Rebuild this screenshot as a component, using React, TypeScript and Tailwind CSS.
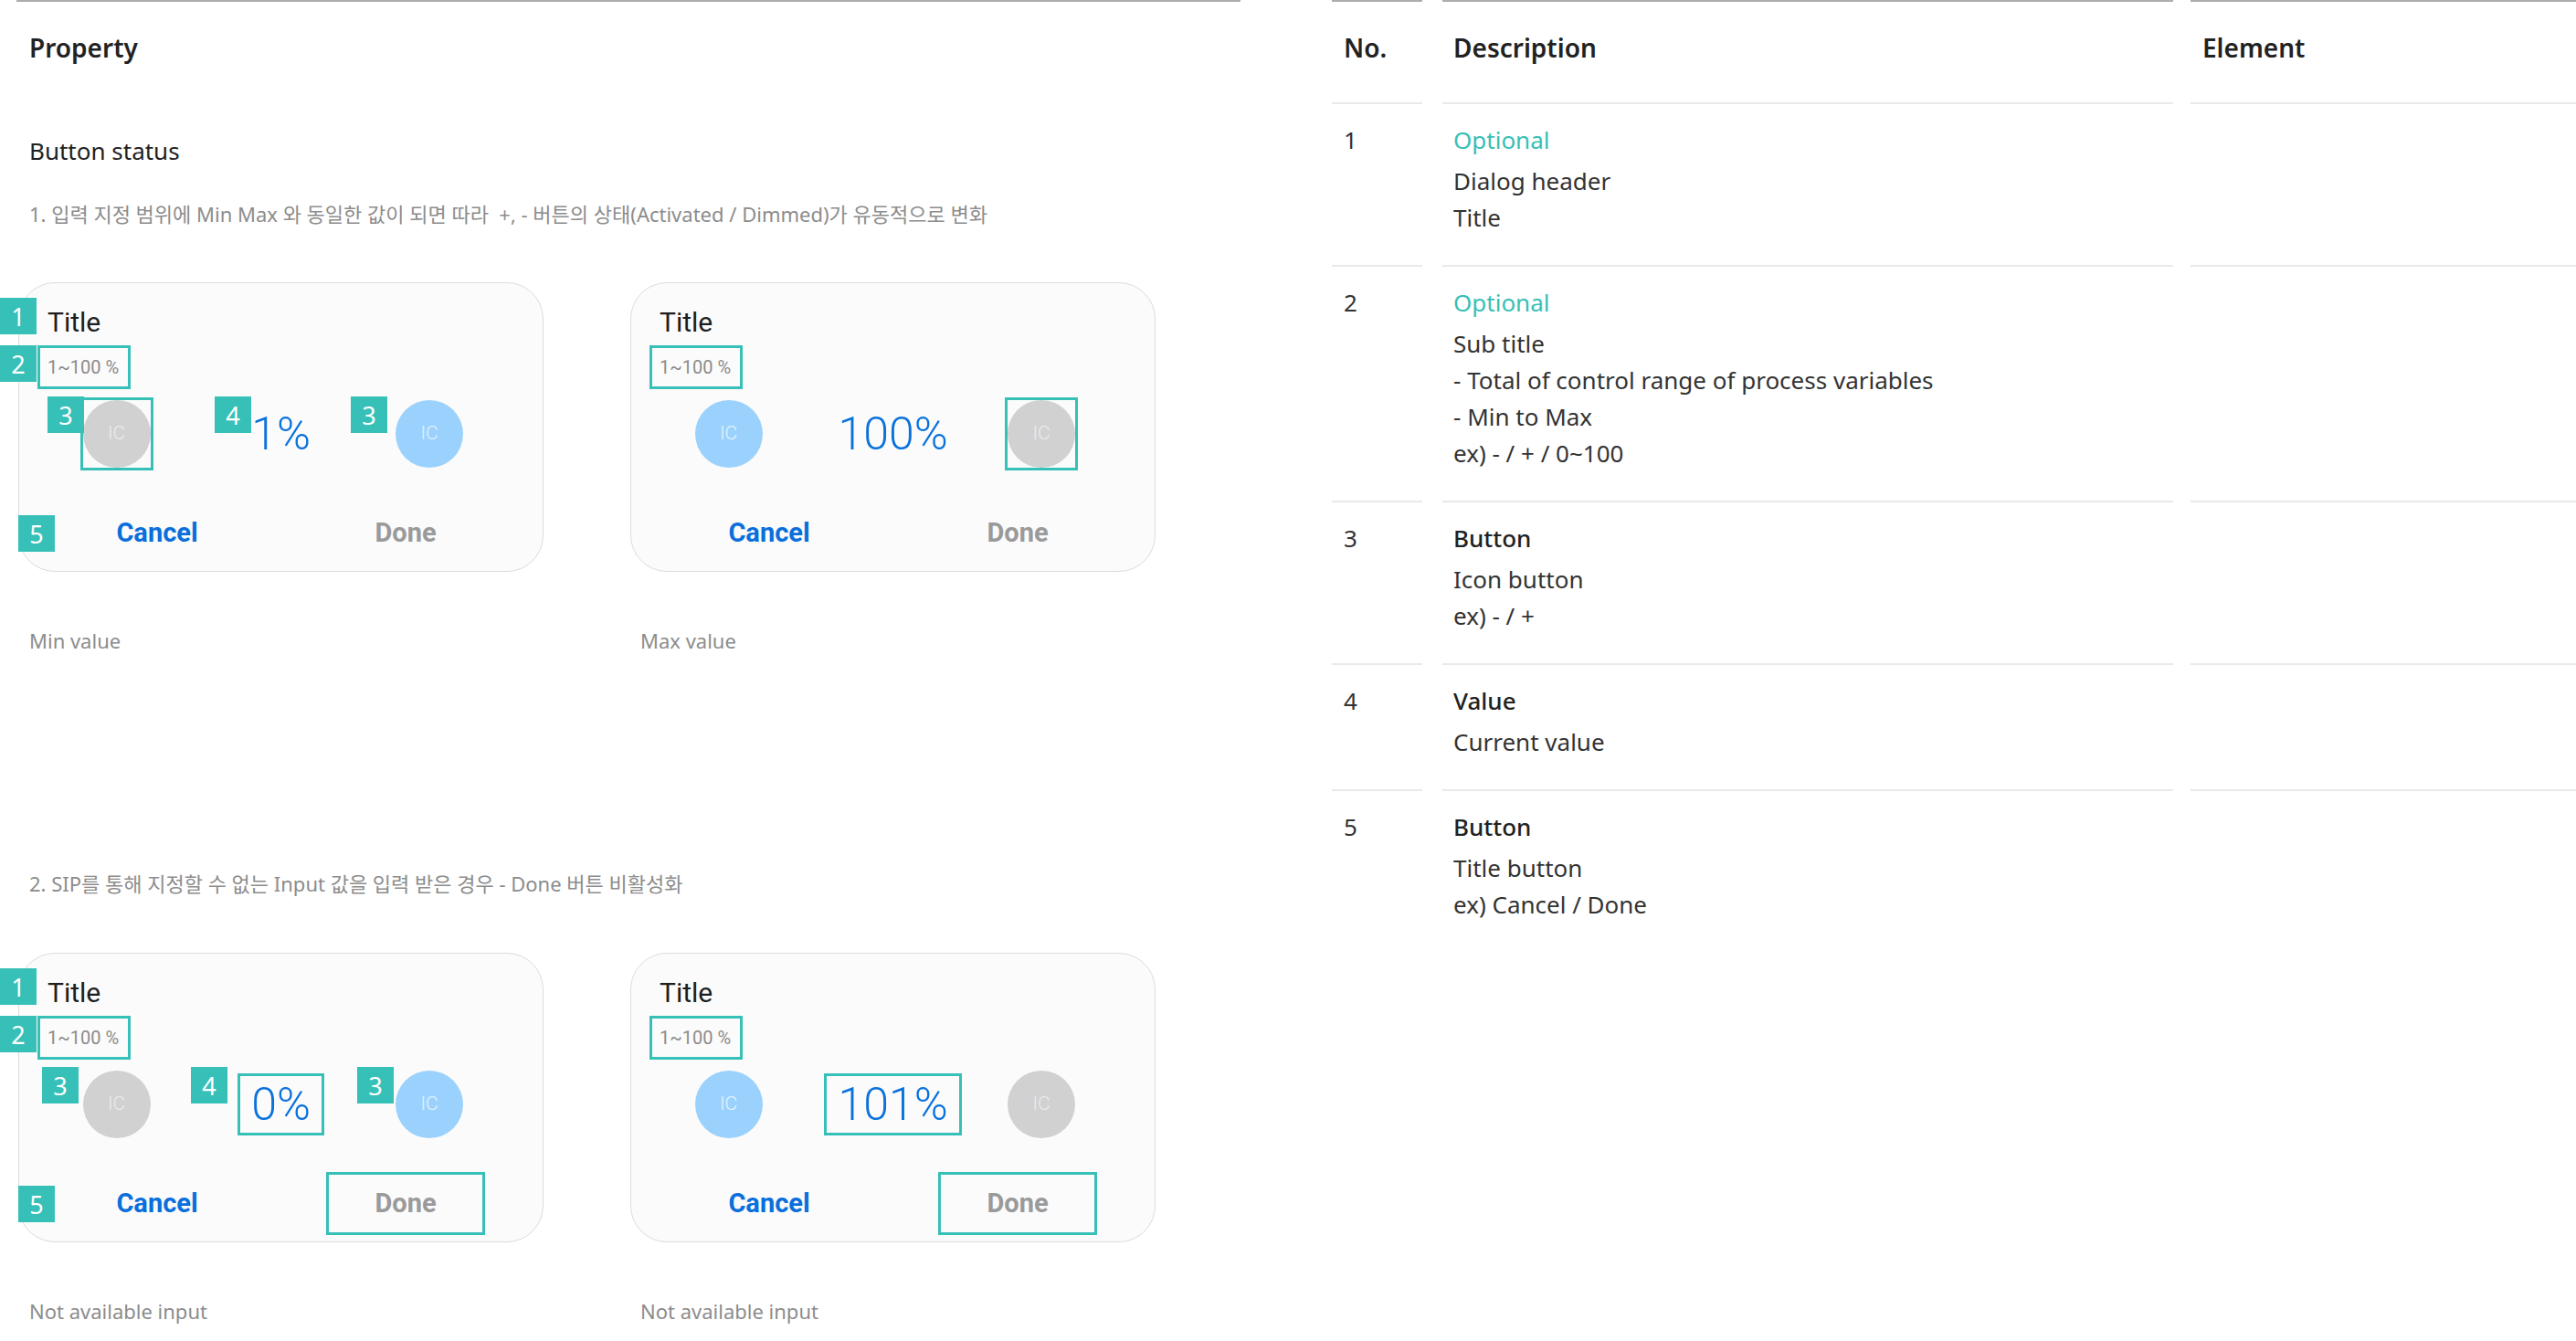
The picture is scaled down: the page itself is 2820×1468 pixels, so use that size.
import React from "react";

type Badge = { n: number; left: number; top: number };

interface CardProps {
  value: string;
  leftOn: boolean;
  rightOn: boolean;
  mark?: "left" | "right" | "value";
  doneBox?: boolean;
  badges?: Badge[];
}

const sans = "font-['Noto_Sans','Noto_Sans_CJK_KR',sans-serif]";
const roboto = "font-['Roboto','Noto_Sans',sans-serif]";

const Circle = ({ on }: { on: boolean }) => (
  <div
    className={`w-[74px] h-[74px] rounded-full flex items-center justify-center text-[21px] font-light ${
      on ? "bg-[#9bd2fd] text-[#e6f3ff]" : "bg-[#d1d1d1] text-[#ececec]"
    }`}
  >
    IC
  </div>
);

const Dialog = ({ value, leftOn, rightOn, mark, doneBox, badges = [] }: CardProps) => (
  <div className={`relative w-[575px] h-[317px] rounded-[40px] border border-[#dcdcdc] bg-[#fbfbfb] ${roboto}`}>
    <div className="pl-[31px] pt-[25px] text-[30px] leading-[36px] text-[#1e1e1e]">Title</div>
    <div className="ml-[20px] mt-[7px] w-[102px] h-[48px] border-[3px] border-[#37c0b7] pl-[8px] flex items-center text-[20px] text-[#8b8b8b]">
      1~100 %
    </div>
    {/* - / value / + */}
    <div className="mt-[12px] h-[74px] flex items-center">
      <div className="w-[213px] flex justify-center">
        {mark === "left" ? (
          <div className="w-[80px] h-[80px] border-[3px] border-[#37c0b7] flex items-center justify-center">
            <Circle on={leftOn} />
          </div>
        ) : (
          <Circle on={leftOn} />
        )}
      </div>
      <div className="w-[147px] flex justify-center">
        <div
          className={`h-[68px] px-[12px] flex items-center text-[50px] font-light text-[#0a72dc] border-[3px] ${
            mark === "value" ? "border-[#37c0b7]" : "border-transparent"
          }`}
        >
          {value}
        </div>
      </div>
      <div className="w-[178px] flex justify-center">
        {mark === "right" ? (
          <div className="w-[80px] h-[80px] border-[3px] border-[#37c0b7] flex items-center justify-center">
            <Circle on={rightOn} />
          </div>
        ) : (
          <Circle on={rightOn} />
        )}
      </div>
    </div>
    <div className="mt-[37px] pl-[64px] flex gap-[98px]">
      <div className="w-[174px] h-[69px] flex items-center justify-center text-[29px] font-bold text-[#0a6fdc]">
        Cancel
      </div>
      <div
        className={`w-[174px] h-[69px] flex items-center justify-center text-[29px] font-bold text-[#9a9a9a] border-[3px] ${
          doneBox ? "border-[#37c0b7]" : "border-transparent"
        }`}
      >
        Done
      </div>
    </div>
    {badges.map((b, i) => (
      <div
        key={i}
        className={`absolute w-10 h-10 bg-[#36c0b7] text-white text-[27px] leading-none flex items-center justify-center ${sans}`}
        style={{ left: b.left, top: b.top }}
      >
        {b.n}
      </div>
    ))}
  </div>
);

const badgesA: Badge[] = [
  { n: 1, left: -21, top: 16 },
  { n: 2, left: -21, top: 68 },
  { n: 3, left: 31, top: 124 },
  { n: 4, left: 214, top: 124 },
  { n: 3, left: 363, top: 124 },
  { n: 5, left: -1, top: 254 },
];

const badgesB: Badge[] = [
  { n: 1, left: -21, top: 16 },
  { n: 2, left: -21, top: 68 },
  { n: 3, left: 25, top: 124 },
  { n: 4, left: 188, top: 124 },
  { n: 3, left: 370, top: 124 },
  { n: 5, left: -1, top: 254 },
];

const rows = [
  { no: "1", head: "Optional", teal: true, lines: ["Dialog header", "Title"] },
  {
    no: "2",
    head: "Optional",
    teal: true,
    lines: ["Sub title", "- Total of control range of process variables", "- Min to Max", "ex) - / + / 0~100"],
  },
  { no: "3", head: "Button", teal: false, lines: ["Icon button", "ex) - / +"] },
  { no: "4", head: "Value", teal: false, lines: ["Current value"] },
  { no: "5", head: "Button", teal: false, lines: ["Title button", "ex) Cancel / Done"] },
];

export default function App() {
  return (
    <div className={`w-[2820px] h-[1468px] bg-white flex overflow-hidden ${sans}`}>
      {/* Property column */}
      <div className="ml-[18px] w-[1340px] border-t-2 border-[#adadad]">
        <div className="pl-[14px] pt-[30px] text-[28px] leading-[40px] font-semibold text-[#222]">Property</div>
        <div className="pl-[14px] mt-[73px] text-[26px] leading-[40px] text-[#222]">Button status</div>
        <div className="pl-[14px] mt-[33px] text-[22px] leading-[32px] text-[#8c8c8c]">
          1. 입력 지정 범위에 Min Max 와 동일한 값이 되면 따라 &nbsp;+, - 버튼의 상태(Activated / Dimmed)가 유동적으로 변화
        </div>
        <div className="mt-[59px] ml-[2px] flex gap-[95px]">
          <div>
            <Dialog value="1%" leftOn={false} rightOn={true} mark="left" badges={badgesA} />
            <div className="mt-[59px] pl-[12px] text-[22px] leading-[32px] text-[#8c8c8c]">Min value</div>
          </div>
          <div>
            <Dialog value="100%" leftOn={true} rightOn={false} mark="right" />
            <div className="mt-[59px] pl-[11px] text-[22px] leading-[32px] text-[#8c8c8c]">Max value</div>
          </div>
        </div>
        <div className="pl-[14px] mt-[234px] text-[22px] leading-[32px] text-[#8c8c8c]">
          2. SIP를 통해 지정할 수 없는 Input 값을 입력 받은 경우 - Done 버튼 비활성화
        </div>
        <div className="mt-[60px] ml-[2px] flex gap-[95px]">
          <div>
            <Dialog value="0%" leftOn={false} rightOn={true} mark="value" doneBox badges={badgesB} />
            <div className="mt-[59px] pl-[12px] text-[22px] leading-[32px] text-[#8c8c8c]">Not available input</div>
          </div>
          <div>
            <Dialog value="101%" leftOn={true} rightOn={false} mark="value" doneBox />
            <div className="mt-[59px] pl-[11px] text-[22px] leading-[32px] text-[#8c8c8c]">Not available input</div>
          </div>
        </div>
      </div>

      {/* Description table */}
      <div className="ml-[100px] flex-1 flex flex-col">
        <div className="flex">
          <div className="w-[99px] h-[112px] border-t-2 border-[#adadad] pl-[13px] pt-[30px] text-[28px] leading-[40px] font-semibold text-[#222]">
            No.
          </div>
          <div className="ml-[22px] w-[800px] border-t-2 border-[#adadad] pl-[12px] pt-[30px] text-[28px] leading-[40px] font-semibold text-[#222]">
            Description
          </div>
          <div className="ml-[19px] flex-1 border-t-2 border-[#adadad] pl-[13px] pt-[30px] text-[28px] leading-[40px] font-semibold text-[#222]">
            Element
          </div>
        </div>
        {rows.map((r, i) => (
          <div key={i} className="flex text-[26px] leading-[40px] text-[#333]">
            <div className="w-[99px] pl-[13px] pt-[19px] pb-[32px] border-t-2 border-[#e9e9e9]">{r.no}</div>
            <div className="ml-[22px] w-[800px] border-t-2 border-[#e9e9e9] pl-[12px] pt-[19px] pb-[32px]">
              <div className={`mb-[5px] ${r.teal ? "text-[#36c0b7]" : "text-[#222] font-medium"}`}>{r.head}</div>
              {r.lines.map((l, j) => (
                <div key={j}>{l}</div>
              ))}
            </div>
            <div className="ml-[19px] flex-1 border-t-2 border-[#e9e9e9]" />
          </div>
        ))}
      </div>
    </div>
  );
}
